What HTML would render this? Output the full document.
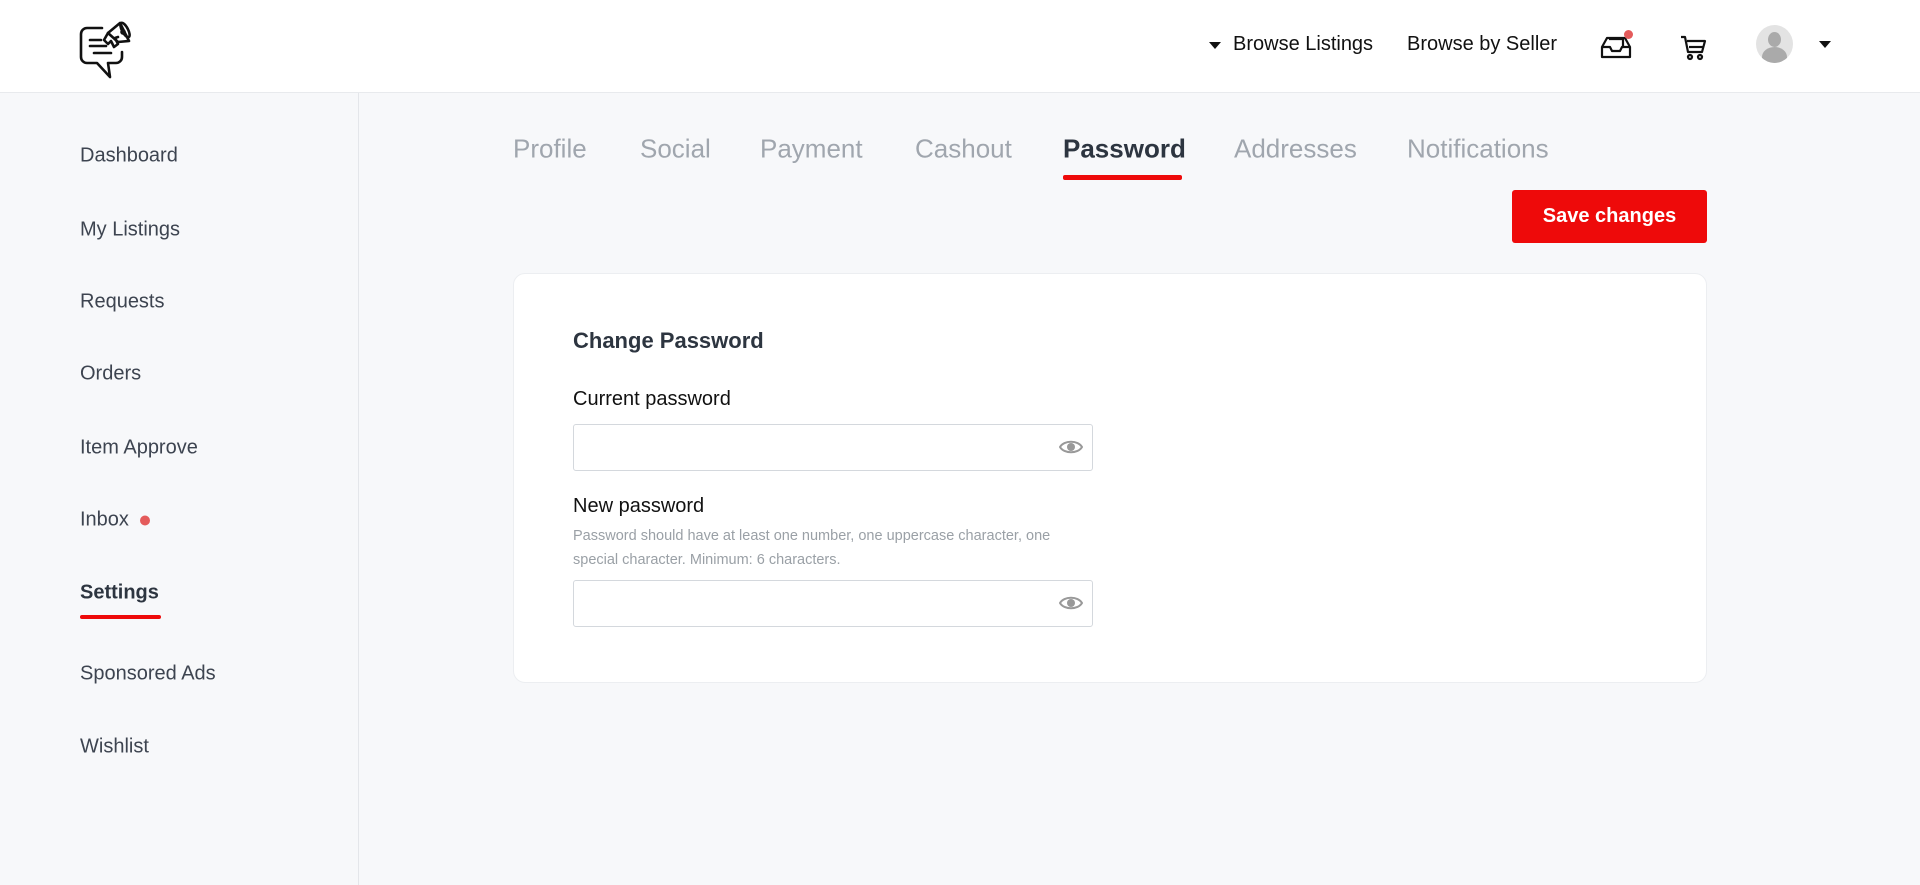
<!DOCTYPE html>
<html><head><meta charset="utf-8"><style>
*{box-sizing:border-box;margin:0;padding:0}
body{width:1920px;height:885px;overflow:hidden;background:#f7f8fa;font-family:"Liberation Sans",sans-serif;position:relative;color:#2d3540}
.hdr{position:absolute;left:0;top:0;width:1920px;height:93px;background:#fff;border-bottom:1px solid #e8eaed}
.side{position:absolute;left:0;top:93px;width:359px;height:792px;border-right:1px solid #e4e6ea;background:#f7f8fa}
.si{position:absolute;left:80px;font-size:20px;color:#3d4450;transform:translateY(-50%);margin-top:2px}
.tab{position:absolute;top:149px;font-size:26px;color:#a0a6ae;transform:translateY(-50%)}
.a{position:absolute}
.inp{position:absolute;left:573px;width:520px;height:47px;border:1px solid #d4d8dd;border-radius:3px;background:#fff}
</style></head><body>
<div class="hdr">
<svg class="a" style="left:78px;top:13px" width="60" height="68" viewBox="0 0 60 68" fill="none" stroke="#111" stroke-width="2.6" stroke-linecap="round" stroke-linejoin="round">
<path d="M24 15H9a6 6 0 0 0-6 6v23a6 6 0 0 0 6 6h10l13 14-2-14h8a6 6 0 0 0 6-6v-5"/>
<path d="M12 27h11M12 33h16M16 40h17"/>
<path d="M30 20l-4 7 4 4 3-3 3 6 4-3-3-6 3-1"/><path d="M30 20l12-10 9 18-11 1z"/><ellipse cx="47" cy="17" rx="3" ry="8" transform="rotate(-28 47 17)"/><circle cx="45" cy="19" r="1.5" fill="#111"/>
</svg>
<svg class="a" style="left:1209px;top:42px" width="12" height="8"><path d="M0 0h12L6 7z" fill="#111"/></svg>
<div class="a" style="left:1233px;top:33px;font-size:20px;color:#111">Browse Listings</div>
<div class="a" style="left:1407px;top:33px;font-size:20px;color:#111">Browse by Seller</div>
<svg class="a" style="left:1600px;top:33px" width="34" height="28" viewBox="0 0 34 28" fill="none" stroke="#111" stroke-width="2.2" stroke-linejoin="round"><path d="M2 14l5-9h18l5 9v10H2z"/><path d="M2 14h8l2 4h8l2-4h8"/><path d="M9 6h14v8"/></svg>
<div class="a" style="left:1624px;top:30px;width:9px;height:9px;border-radius:50%;background:#e45b5b"></div>
<svg class="a" style="left:1680px;top:34px" width="28" height="28" viewBox="0 0 28 28" fill="none" stroke="#111" stroke-width="2.2" stroke-linejoin="round"><path d="M1 3h4l3 15h14l3-11H7"/><path d="M9 13h14"/><circle cx="10" cy="23" r="2"/><circle cx="20" cy="23" r="2"/></svg>
<div class="a" style="left:1756px;top:25px;width:37px;height:38px;border-radius:50%;background:#e3e3e3;overflow:hidden"><div class="a" style="left:12px;top:7px;width:13px;height:15px;border-radius:50%;background:#aaa"></div><div class="a" style="left:6px;top:22px;width:25px;height:20px;border-radius:50% 50% 0 0;background:#aaa"></div></div>
<svg class="a" style="left:1819px;top:41px" width="12" height="8"><path d="M0 0h12L6 7z" fill="#111"/></svg>
</div>
<div class="side">
<div class="si" style="top:61px">Dashboard</div>
<div class="si" style="top:135px">My Listings</div>
<div class="si" style="top:207px">Requests</div>
<div class="si" style="top:279px">Orders</div>
<div class="si" style="top:353px">Item Approve</div>
<div class="si" style="top:425px">Inbox <span style="display:inline-block;width:10px;height:10px;border-radius:50%;background:#e45b5b;margin-left:6px;vertical-align:middle"></span></div>
<div class="si" style="top:498px;font-weight:bold;color:#2d3540">Settings</div>
<div class="a" style="left:80px;top:522px;width:81px;height:4px;border-radius:2px;background:#ee0a0a"></div>
<div class="si" style="top:579px">Sponsored Ads</div>
<div class="si" style="top:652px">Wishlist</div>
</div>
<div class="tab" style="left:513px">Profile</div>
<div class="tab" style="left:640px">Social</div>
<div class="tab" style="left:760px">Payment</div>
<div class="tab" style="left:915px">Cashout</div>
<div class="tab" style="left:1063px;color:#2d3540;font-weight:bold">Password</div>
<div class="a" style="left:1063px;top:175px;width:119px;height:5px;border-radius:2px;background:#ee0a0a"></div>
<div class="tab" style="left:1234px">Addresses</div>
<div class="tab" style="left:1407px">Notifications</div>
<div class="a" style="left:1512px;top:190px;width:195px;height:53px;background:#ee0a0a;border-radius:3px;color:#fff;font-weight:bold;font-size:20px;text-align:center;line-height:53px">Save changes</div>
<div class="a" style="left:513px;top:273px;width:1194px;height:410px;background:#fff;border:1px solid #eceef1;border-radius:12px"></div>
<div class="a" style="left:573px;top:328px;font-size:22px;font-weight:bold;color:#2d3540">Change Password</div>
<div class="a" style="left:573px;top:388px;font-size:20px;color:#111">Current password</div>
<div class="inp" style="top:424px"></div>
<div class="a" style="left:573px;top:495px;font-size:20px;color:#111">New password</div>
<div class="a" style="left:573px;top:524px;font-size:14.5px;color:#9aa0a6;line-height:24px;width:520px">Password should have at least one number, one uppercase character, one special character. Minimum: 6 characters.</div>
<div class="inp" style="top:580px"></div>
<svg class="a" style="left:1059px;top:439px" width="24" height="16" viewBox="0 0 24 16"><path d="M1 8C5 1 19 1 23 8C19 15 5 15 1 8z" fill="none" stroke="#999" stroke-width="2"/><circle cx="12" cy="8" r="4" fill="#999"/></svg>
<svg class="a" style="left:1059px;top:595px" width="24" height="16" viewBox="0 0 24 16"><path d="M1 8C5 1 19 1 23 8C19 15 5 15 1 8z" fill="none" stroke="#999" stroke-width="2"/><circle cx="12" cy="8" r="4" fill="#999"/></svg>
</body></html>
